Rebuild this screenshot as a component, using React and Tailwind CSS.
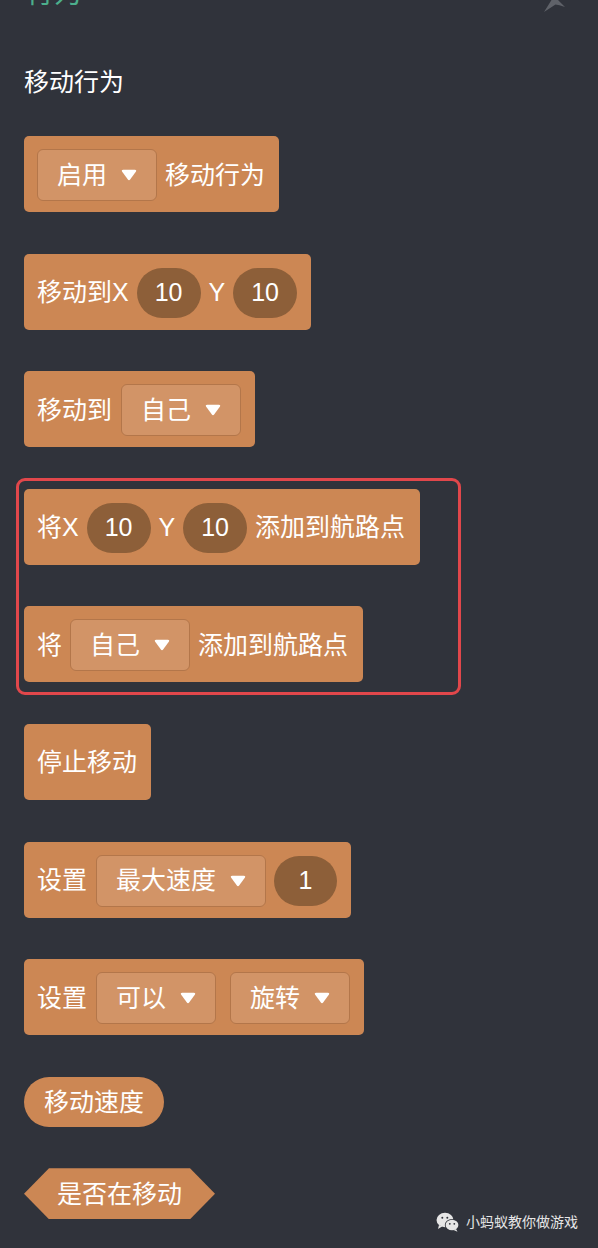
import React from 'react'

const font = { fontFamily: '"Liberation Sans", "Noto Sans CJK SC", sans-serif' }

function Arrow() {
  return (
    <svg width="16" height="12" viewBox="0 0 16 12" className="shrink-0">
      <path d="M2.2 0.8 H13.8 Q16 0.8 14.8 2.8 L9.3 10.3 Q8 12 6.7 10.3 L1.2 2.8 Q0 0.8 2.2 0.8 Z" fill="#ffffff" />
    </svg>
  )
}

function Block({ children, className = '' }) {
  return (
    <div className={`flex h-[76px] w-fit items-center gap-2 rounded-[5px] bg-[#cc8754] pl-[13px] pr-[14px] pt-[2px] text-[25px] leading-none text-white ${className}`}>
      {children}
    </div>
  )
}

function Dropdown({ label, className = '' }) {
  return (
    <div className={`flex h-[52px] items-center gap-[14px] rounded-[6px] border border-[#b3764a] bg-[#d29467] pl-[19px] pr-[19px] ${className}`}>
      <span>{label}</span>
      <Arrow />
    </div>
  )
}

function Num({ value }) {
  return (
    <div className="flex h-[50px] min-w-[63px] items-center justify-center rounded-full bg-[#8d5f39] px-[18px]">
      {value}
    </div>
  )
}

export default function App() {
  return (
    <div style={font} className="relative min-h-[1248px] overflow-hidden bg-[#30333b] px-6">
      <div className="-mt-[20px] h-[28px] pl-[2px] text-[28px] leading-[28px] text-[#4caf8c]">行为</div>
      <svg width="28" height="14" viewBox="0 0 28 14" className="absolute left-[540px] top-0">
        <path d="M4 12 L11.5 0 L18 0 L25 7 L19.5 5.2 L15.5 4.5 Z" fill="#5f6269" />
      </svg>

      <div className="mt-[62px] text-[25px] leading-[25px] text-white">移动行为</div>

      <div className="mt-[41px] flex flex-col gap-[41.6px]">
        <Block className="pl-[12px]">
          <Dropdown label="启用" />
          <span>移动行为</span>
        </Block>

        <Block className="pr-[13px]">
          <span>移动到X</span>
          <Num value="10" />
          <span>Y</span>
          <Num value="10" />
        </Block>

        <Block className="pr-[11px]">
          <span>移动到</span>
          <Dropdown label="自己" className="ml-px" />
        </Block>

        <div className="relative flex flex-col gap-[41.6px]">
          <div className="pointer-events-none absolute -left-[8px] -top-[11px] h-[217px] w-[445px] rounded-[9px] border-[3px] border-[#e1474b]" />
          <Block className="pr-[15px]">
            <span>将X</span>
            <Num value="10" />
            <span>Y</span>
            <Num value="10" />
            <span>添加到航路点</span>
          </Block>
          <Block className="pr-[15px]">
            <span>将</span>
            <Dropdown label="自己" />
            <span>添加到航路点</span>
          </Block>
        </div>

        <Block>
          <span>停止移动</span>
        </Block>

        <Block className="pr-[12px]">
          <span>设置</span>
          <Dropdown label="最大速度" className="ml-px" />
          <Num value="1" />
        </Block>

        <Block className="pr-[13px]">
          <span>设置</span>
          <Dropdown label="可以" className="ml-px" />
          <Dropdown label="旋转" className="ml-[6px]" />
        </Block>

        <div className="flex h-[50px] w-fit items-center rounded-full bg-[#cc8754] px-5 pt-[2px] text-[25px] leading-none text-white">
          移动速度
        </div>

        <div className="flex h-[51px] w-fit items-center bg-[#cc8754] px-[33px] pt-[2px] text-[25px] leading-none text-white [clip-path:polygon(25px_0,calc(100%-25px)_0,100%_50%,calc(100%-25px)_100%,25px_100%,0_50%)]">
          是否在移动
        </div>
      </div>

      <div className="absolute bottom-[16px] right-[20px] flex items-center gap-[6px] text-[14px] leading-none text-[#e6e6e6]">
        <svg width="24" height="20" viewBox="0 0 24 20">
          <ellipse cx="9" cy="8" rx="8.5" ry="7.2" fill="#e6e6e6" />
          <path d="M3 13 L2 17 L6.5 14.2 Z" fill="#e6e6e6" />
          <ellipse cx="16" cy="13" rx="7.2" ry="6" fill="#30333b" />
          <ellipse cx="16" cy="13" rx="6.4" ry="5.3" fill="#e6e6e6" />
          <path d="M20 17 L21.5 19.8 L17.5 18 Z" fill="#e6e6e6" />
          <circle cx="6.3" cy="5.8" r="1" fill="#30333b" />
          <circle cx="11.3" cy="5.8" r="1" fill="#30333b" />
          <circle cx="13.8" cy="11.8" r="0.9" fill="#30333b" />
          <circle cx="18.3" cy="11.8" r="0.9" fill="#30333b" />
        </svg>
        <span>小蚂蚁教你做游戏</span>
      </div>
    </div>
  )
}
